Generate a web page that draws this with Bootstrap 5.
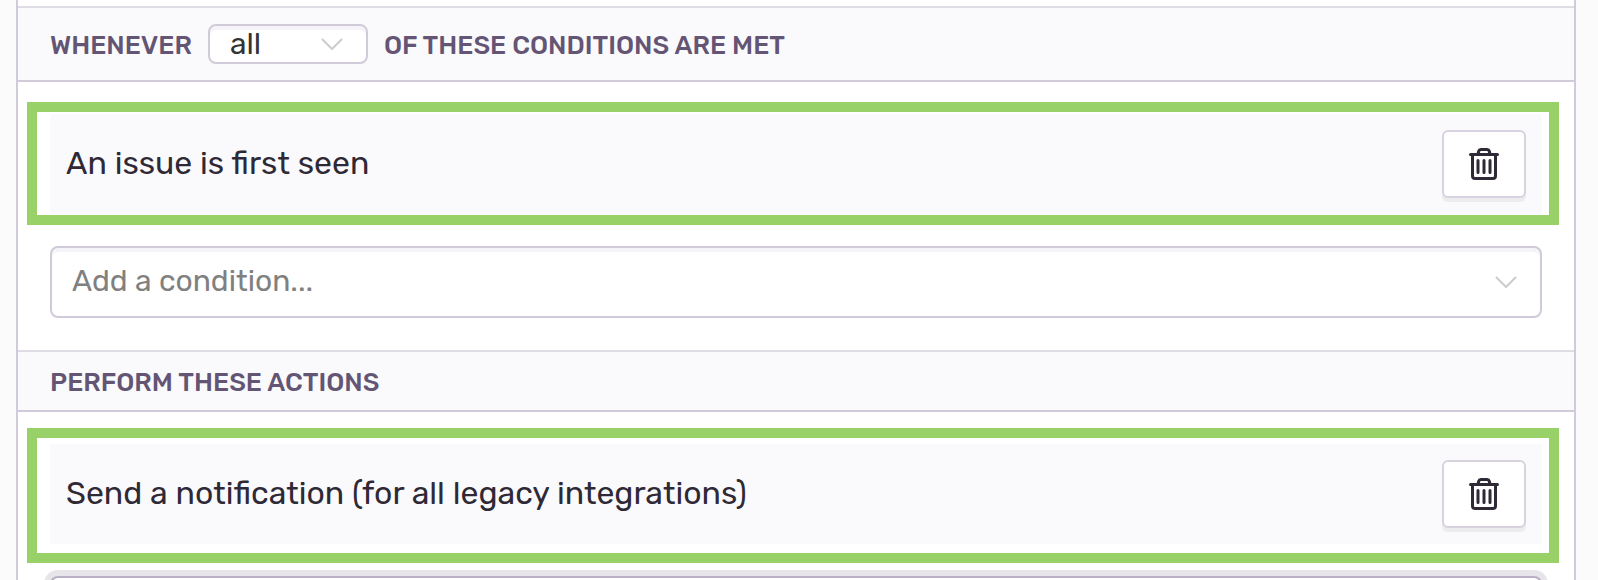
<!DOCTYPE html>
<html lang="en">
<head>
<meta charset="utf-8">
<meta name="viewport" content="width=device-width, initial-scale=1">
<title>Alert rule</title>
<link href="https://cdn.jsdelivr.net/npm/bootstrap@5.3.0/dist/css/bootstrap.min.css" rel="stylesheet">
<style>
  body { font-family: Rubik, Roboto, "Liberation Sans", sans-serif; background: #fbfbfc; color: #2f2936; }
  .rule-panel { margin: 0 22px 0 16px; padding-top: 6px; background: #fff; border: solid #d1cad8; border-width: 0 2px; }
  .rule-heading { min-height: 62px; padding: 0 32px; background: #fafafc; border-top: 2px solid #e0dce5; border-bottom: 2px solid #d1cad8; color: #645574; font-size: 26px; line-height: 32px; font-weight: 500; }
  .rule-heading.with-control { min-height: 76px; }
  .heading-text { padding-top: 3px; }
  .rule-body { padding: 32px; gap: 32px; }
  .rule-row { height: 100px; padding: 0 16px; background: #fafafc; font-size: 32px; line-height: 40px; }
  .rule-text { padding-bottom: 2px; }
  .highlight { inset: -12px -17px -11px -23px; border: 10px solid #98d168; pointer-events: none; }
  .highlight.roomy { top: -16px; bottom: -19px; }
  .btn-delete { width: 84px; height: 68px; background: #fff; border: 2px solid #d8d2de; border-radius: 6px; box-shadow: 0 4px 0 #ececef; color: #2f2936; }
  .rule-select { height: 72px; padding: 0 64px 2px 20px; border: 2px solid #d1cad8; border-radius: 8px; color: #808080; font-size: 30px; line-height: 36px; box-shadow: inset 0 4px 0 #f5f4f8;
    background: #fff url("data:image/svg+xml,%3Csvg xmlns='http://www.w3.org/2000/svg' viewBox='0 0 22 12'%3E%3Cpath d='M1 1l10 10L21 1' fill='none' stroke='%23ccc' stroke-width='2'/%3E%3C/svg%3E") no-repeat right 23px center / 22px 12px; }
  .rule-select.compact { width: 160px; height: 40px; color: #333; }
  .rule-select.active { border-color: #b9b0c6; box-shadow: 0 0 0 6px #e7e5ea; }
</style>
</head>
<body class="vh-100 overflow-hidden">
<main class="rule-panel">
  <section>
    <div class="rule-heading with-control d-flex align-items-center gap-3">
      <label for="match" class="heading-text">WHENEVER</label>
      <select id="match" class="form-select rule-select compact"><option>all</option></select>
      <span class="heading-text">OF THESE CONDITIONS ARE MET</span>
    </div>
    <div class="rule-body d-flex flex-column">
      <div class="rule-row position-relative d-flex align-items-center justify-content-between">
        <span class="rule-text">An issue is first seen</span>
        <button type="button" class="btn btn-delete p-0 d-flex align-items-center justify-content-center" aria-label="Delete condition">
          <svg width="32" height="32" viewBox="0 0 32 32" fill="none" stroke="currentColor" stroke-width="3" stroke-linecap="round" stroke-linejoin="round" aria-hidden="true"><path d="M2.500 6.500h27M4.500 7v21q0 2.500 2.500 2.500h18q2.500 0 2.500-2.500V7M10 6l.8-3q.4-1.500 2-1.500h6.400q1.600 0 2 1.500l.8 3M10 12.500v12M16 12.500v12M22 12.500v12"/></svg>
        </button>
        <div class="highlight position-absolute"></div>
      </div>
      <select class="form-select rule-select" aria-label="Add a condition"><option>Add a condition...</option></select>
    </div>
  </section>
  <section>
    <div class="rule-heading d-flex align-items-center"><span class="heading-text">PERFORM THESE ACTIONS</span></div>
    <div class="rule-body d-flex flex-column">
      <div class="rule-row position-relative d-flex align-items-center justify-content-between">
        <span class="rule-text">Send a notification (for all legacy integrations)</span>
        <button type="button" class="btn btn-delete p-0 d-flex align-items-center justify-content-center" aria-label="Delete action">
          <svg width="32" height="32" viewBox="0 0 32 32" fill="none" stroke="currentColor" stroke-width="3" stroke-linecap="round" stroke-linejoin="round" aria-hidden="true"><path d="M2.500 6.500h27M4.500 7v21q0 2.500 2.500 2.500h18q2.500 0 2.500-2.500V7M10 6l.8-3q.4-1.500 2-1.500h6.400q1.600 0 2 1.500l.8 3M10 12.500v12M16 12.500v12M22 12.500v12"/></svg>
        </button>
        <div class="highlight roomy position-absolute"></div>
      </div>
      <select class="form-select rule-select active" aria-label="Add an action"><option></option></select>
    </div>
  </section>
</main>
<script src="https://cdn.jsdelivr.net/npm/bootstrap@5.3.0/dist/js/bootstrap.bundle.min.js"></script>
</body>
</html>
